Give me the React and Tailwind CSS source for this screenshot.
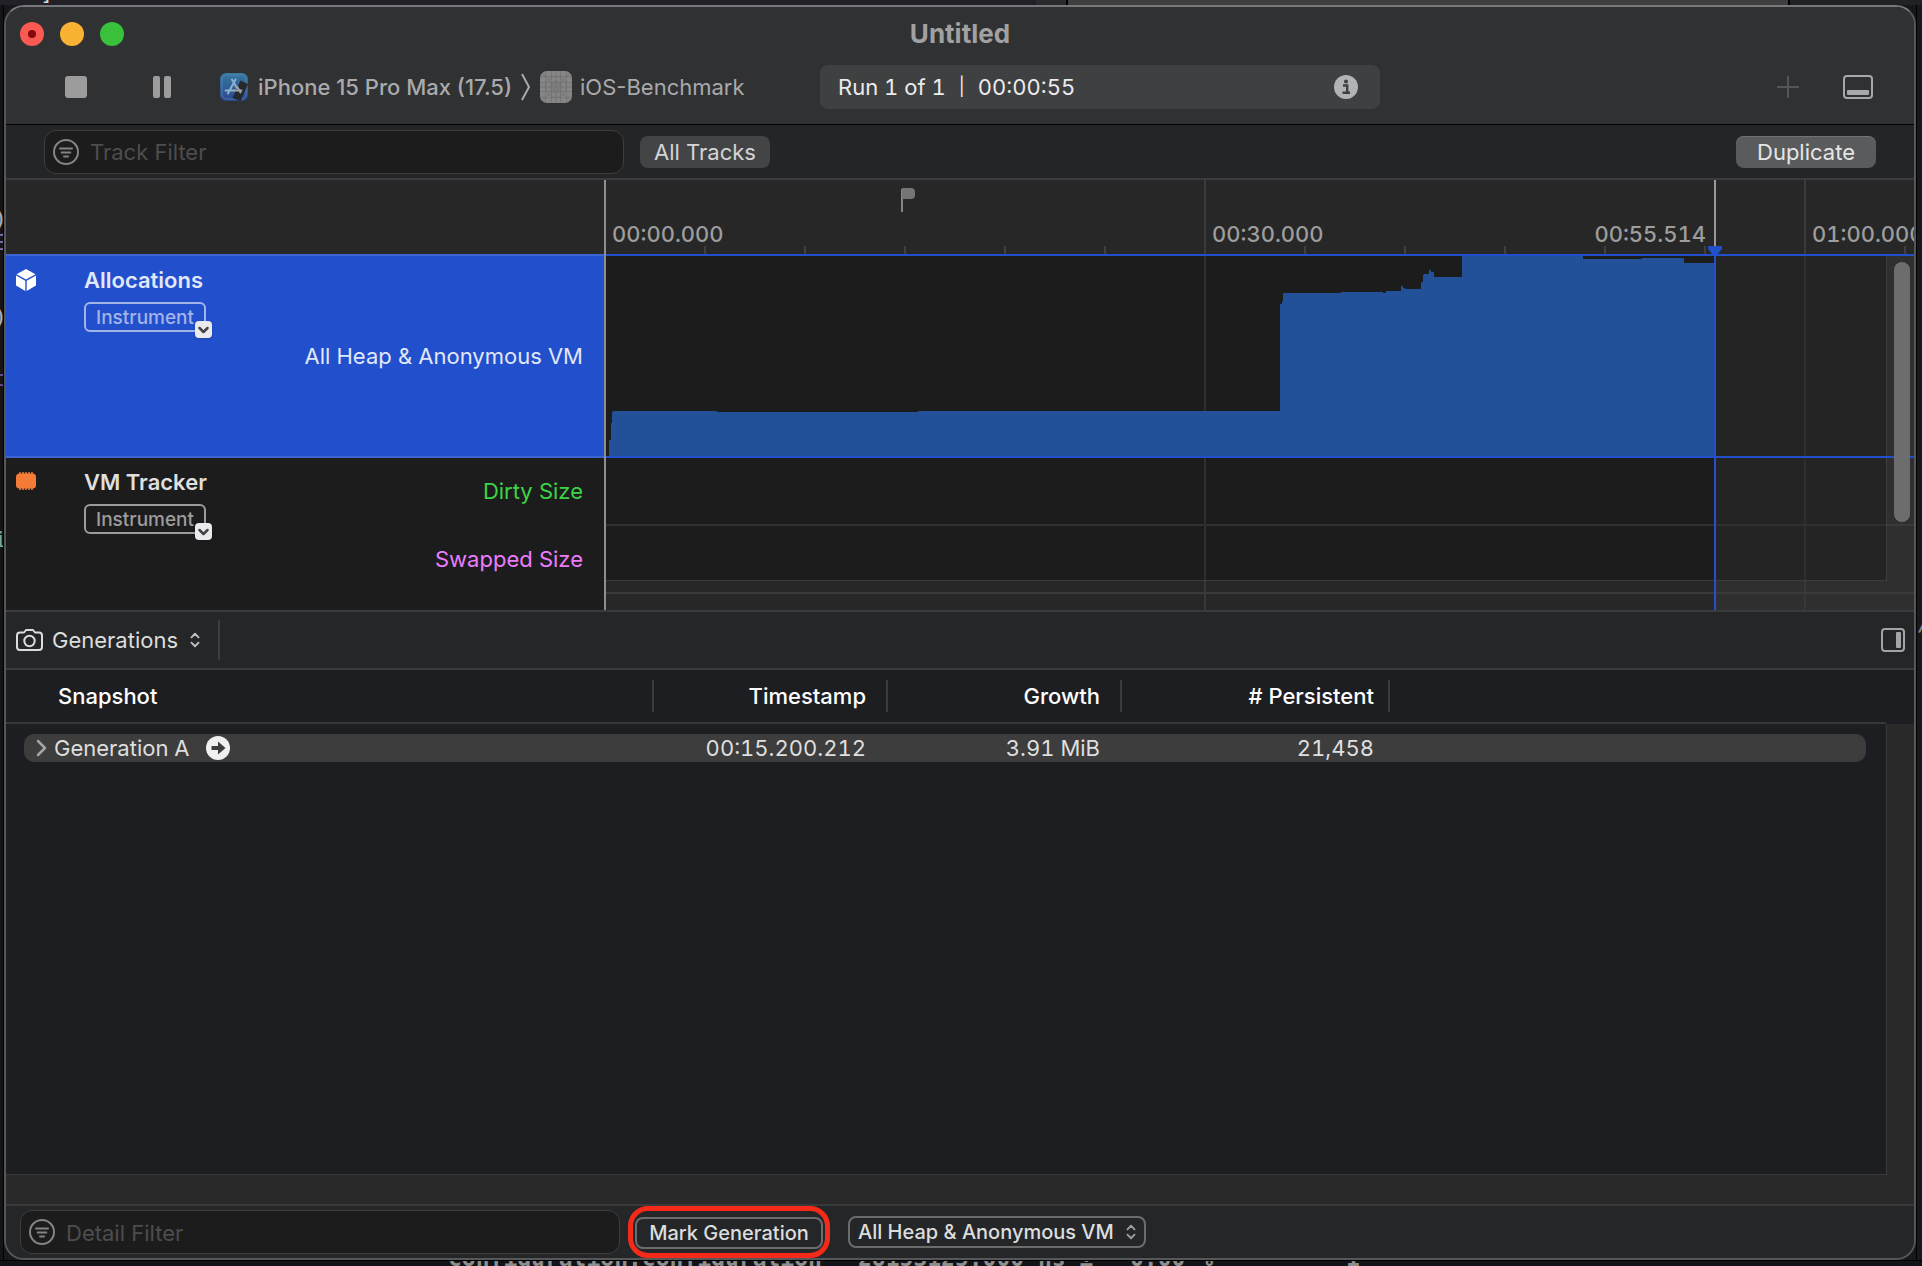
import React from "react";

const STEPS = [
  [609, 440], [611, 423], [612, 412], [613, 411], [717, 412], [918, 411],
  [1280, 304], [1282, 301], [1283, 293], [1341, 292], [1383, 293], [1386, 291],
  [1401, 286], [1403, 288], [1405, 289], [1421, 282], [1423, 275], [1424, 274],
  [1429, 270], [1431, 272], [1434, 277], [1462, 256], [1583, 259], [1642, 258],
  [1684, 263],
].map(([x, y]) => [x - 606, y - 256]);

const HEAP_PATH =
  "M3 200" +
  STEPS.map(([x, y]) => "H" + x + "V" + y).join("") +
  "H1108V200Z";

const TICKS = [98, 198, 298, 398, 498, 698, 798, 898, 998, 1098, 1298];

function FilterIcon() {
  return (
    <svg className="size-[26px] shrink-0" viewBox="0 0 26 26" fill="none" stroke="#848484" strokeWidth="2" strokeLinecap="round">
      <circle cx="13" cy="13" r="12" />
      <path d="M7 9.5h12M8.700 13.500h8.600M11 17.500h4" />
    </svg>
  );
}

function UpDown({ className }) {
  return (
    <svg className={className} viewBox="0 0 12 18" fill="none" stroke="currentColor" strokeWidth="2.200" strokeLinecap="round" strokeLinejoin="round">
      <path d="M2 6l4-4 4 4M2 12l4 4 4-4" />
    </svg>
  );
}

function DeviceIcon() {
  return (
    <svg className="size-7 shrink-0" viewBox="0 0 28 28" fill="none">
      <defs>
        <linearGradient id="device" x1="0" y1="0" x2="0" y2="1">
          <stop offset="0" stopColor="#357a9f" />
          <stop offset="1" stopColor="#2b4590" />
        </linearGradient>
      </defs>
      <rect width="28" height="28" rx="6" fill="url(#device)" />
      <rect x="2" y="2" width="24" height="24" rx="4.500" stroke="#5b8fb4" strokeOpacity=".7" />
      <path d="M15.500 6.500L8 20.500M12 6.500l6 10.500M5.500 17.500h9" stroke="#8fb0cc" strokeWidth="2" strokeLinecap="round" />
      <path d="M20.500 7.500l7.500 3.500-7.500 17-8-3z" fill="#25282d" />
      <path d="M14 17.500h7.500M17 13.500l3.500 6" stroke="#9da3a8" strokeWidth="2" strokeLinecap="round" />
    </svg>
  );
}

function AppGridIcon() {
  return (
    <svg className="size-8 shrink-0" viewBox="0 0 32 32" fill="none">
      <rect width="32" height="32" rx="7" fill="#868686" />
      <g stroke="#6e6e6e" strokeWidth=".8" strokeOpacity=".8">
        <path d="M5.500 0v32M11.500 0v32M16 0v32M20.500 0v32M26.500 0v32M0 5.500h32M0 11.500h32M0 16h32M0 20.500h32M0 26.500h32M2 2l28 28M30 2L2 30" />
        <circle cx="16" cy="16" r="10.500" />
        <circle cx="16" cy="16" r="6" />
        <circle cx="16" cy="16" r="3.500" />
      </g>
    </svg>
  );
}

function InstrumentBadge({ tone }) {
  return (
    <button type="button" className={"relative flex h-[30px] w-[122px] items-center rounded-md border-2 pt-px pl-[10px] text-[19px] font-medium " + tone}>
      Instrument
      <span className="absolute -right-2 -bottom-2 flex size-[17px] items-center justify-center rounded bg-[#e9e9ee] shadow">
        <svg className="size-[13px]" viewBox="0 0 13 13" fill="none" stroke="#444" strokeWidth="2.500" strokeLinecap="round" strokeLinejoin="round">
          <path d="M2.500 5l4 4 4-4" />
        </svg>
      </span>
    </button>
  );
}

function Toolbar() {
  return (
    <header className="flex h-[118px] shrink-0 flex-col border-b border-black bg-[#303133]">
      <div className="flex h-[54px] items-center">
        <div className="flex flex-1 items-center gap-4 pl-[14px]">
          <button type="button" aria-label="Close" className="flex size-6 items-center justify-center rounded-full bg-[#fb5a52]">
            <span className="size-2 rounded-full bg-[#87090c]" />
          </button>
          <button type="button" aria-label="Minimize" className="size-6 rounded-full bg-[#f9b233]" />
          <button type="button" aria-label="Zoom" className="size-6 rounded-full bg-[#3ac13c]" />
        </div>
        <h1 className="text-[26px] leading-8 font-bold text-[#a1a1a2]">Untitled</h1>
        <div className="flex-1 pl-[14px]" />
      </div>
      <div className="flex h-[52px] items-center text-[22px] text-[#a9aaab]">
        <div className="flex w-[814px] shrink-0 items-center pl-[59px]">
          <button type="button" aria-label="Stop" className="size-[22px] rounded-[3px] bg-[#9c9c9d]" />
          <button type="button" aria-label="Pause" className="ml-[66px] flex gap-1">
            <span className="h-[22px] w-[7px] rounded-[2px] bg-[#9c9c9d]" />
            <span className="h-[22px] w-[7px] rounded-[2px] bg-[#9c9c9d]" />
          </button>
          <button type="button" className="ml-[49px] flex items-center gap-[10px] font-medium whitespace-nowrap">
            <DeviceIcon />
            iPhone 15 Pro Max (17.5)
          </button>
          <svg className="mx-[9px] h-7 w-[10px] shrink-0" viewBox="0 0 10 28" fill="none" stroke="#a9aaab" strokeWidth="2">
            <path d="M1 1l7 13-7 13" />
          </svg>
          <button type="button" className="flex items-center gap-2 whitespace-nowrap">
            <AppGridIcon />
            iOS-Benchmark
          </button>
        </div>
        <div className="flex h-11 w-[560px] items-center justify-between rounded-lg bg-[#3f4042] pr-[22px] pl-[18px] text-[#ececec]">
          <span className="flex items-center gap-[13px] tabular-nums">
            <span>Run 1 of 1</span>
            <span className="text-lg">|</span>
            <span>00:00:55</span>
          </span>
          <button type="button" aria-label="Run info">
            <svg className="size-6" viewBox="0 0 24 24">
              <circle cx="12" cy="12" r="12" fill="#b2b3b4" />
              <circle cx="12" cy="6.500" r="2" fill="#3f4042" />
              <path d="M9 10.500h4.200v7M8.500 17.800h7.500" stroke="#3f4042" strokeWidth="2.400" fill="none" />
            </svg>
          </button>
        </div>
        <div className="flex flex-1 items-center justify-end gap-11 pr-[41px]">
          <button type="button" aria-label="Add">
            <svg className="size-[22px]" viewBox="0 0 22 22" stroke="#555658" strokeWidth="2">
              <path d="M11 0v22M0 11h22" />
            </svg>
          </button>
          <button type="button" aria-label="Toggle detail pane">
            <svg className="h-6 w-[30px]" viewBox="0 0 30 24" fill="none">
              <rect x="1" y="1" width="28" height="22" rx="3" stroke="#a7a8a9" strokeWidth="2" />
              <rect x="4" y="15" width="22" height="5" rx="1" fill="#a7a8a9" />
            </svg>
          </button>
        </div>
      </div>
    </header>
  );
}

function TrackFilterBar() {
  return (
    <div className="flex h-[55px] shrink-0 items-center border-b-2 border-[#3a3b3e] bg-[#242527] pr-[38px] pl-[38px] text-[22px]">
      <label className="flex h-11 w-[580px] items-center gap-[11px] rounded-xl border border-[#3d3e3f] bg-[#1c1c1c] pl-2">
        <FilterIcon />
        <input aria-label="Track Filter" placeholder="Track Filter" className="min-w-0 flex-1 bg-transparent pt-[2px] text-[#ddd] outline-none placeholder:text-[#4d4d4d]" />
      </label>
      <button type="button" className="ml-4 h-8 w-[130px] rounded-lg bg-[#434446] text-[#d4d5d5]">All Tracks</button>
      <button type="button" className="ml-auto h-8 w-[140px] rounded-lg bg-[#5a5b5d] text-[#e6e6e6] shadow-[inset_0_1px_0_#727374]">Duplicate</button>
    </div>
  );
}

function TrackList() {
  return (
    <div className="flex w-[600px] shrink-0 flex-col border-r-2 border-[#8e8e90] bg-[#1c1c1c] text-[22px] leading-7">
      <div className="h-[74px] bg-[#272727]" />
      <section className="flex h-[204px] border-y-2 border-[#3d65d1] bg-[#224fcb] text-[#e1e7f8]">
        <svg className="mt-[13px] ml-[10px] h-[22px] w-5" viewBox="0 0 20 22" fill="#fff">
          <path d="M10 0l9.500 5.300L10 10.600.500 5.300zM0 6.600l9.300 5.200V22L0 16.500zM20 6.600l-9.300 5.200V22l9.300-5.500z" />
        </svg>
        <div className="ml-[48px] pt-[10px]">
          <h2 className="mb-2 font-semibold">Allocations</h2>
          <InstrumentBadge tone="border-[#a3b4e8] text-[#a3b4e8]" />
        </div>
        <p className="mt-[86px] mr-[21px] ml-auto">All Heap &amp; Anonymous VM</p>
      </section>
      <section className="flex h-[152px] text-[#dfdfdf]">
        <svg className="mt-[14px] ml-[10px] h-[18px] w-5" viewBox="0 0 20 18" fill="#f57c38">
          <rect y="1.500" width="20" height="15" rx="3.500" />
          <path d="M4 0v18M7 0v18M10 0v18M13 0v18M16 0v18" stroke="#f57c38" strokeWidth="1.500" />
        </svg>
        <div className="ml-[48px] pt-[10px]">
          <h2 className="mb-2 font-semibold">VM Tracker</h2>
          <InstrumentBadge tone="border-[#9c9c9c] text-[#9c9c9c]" />
        </div>
        <div className="mt-[19px] mr-[21px] ml-auto flex flex-col gap-10 text-right">
          <p className="text-[#3dd445]">Dirty Size</p>
          <p className="text-[#ec7cff]">Swapped Size</p>
        </div>
      </section>
    </div>
  );
}

function Timeline() {
  return (
    <div className="relative min-w-0 flex-1 overflow-hidden bg-[#272727]">
      <svg className="h-[430px] w-[1400px]" viewBox="0 0 1400 430" shapeRendering="crispEdges">
        <rect width="1400" height="74" fill="#272727" />
        <rect y="74" width="1108" height="356" fill="#1c1c1c" />
        <rect x="1108" y="74" width="292" height="356" fill="#242424" />
        <rect y="344" width="1400" height="2" fill="#303030" />
        <path d="M599 0V74M1199 0V74" stroke="#3b3b3b" strokeWidth="2" />
        <path d="M599 74V430M1199 74V430" stroke="#2e2e2e" strokeWidth="2" />
        {TICKS.map((x) => (
          <rect key={x} x={x} y="66" width="2" height="8" fill="#3f3f3f" />
        ))}
        <g transform="translate(0 76)">
          <path d={HEAP_PATH} fill="#235199" />
        </g>
        <path d="M0 400H1280V76H1400V430H0Z" fill="#fff" fillOpacity=".05" />
        <path d="M0 400.500H1280.500V76" fill="none" stroke="#3d3d3d" />
        <rect y="412" width="1400" height="2" fill="#3a3a3a" />
        <rect y="74" width="1400" height="2" fill="#224fcb" />
        <rect y="276" width="1400" height="2" fill="#224fcb" />
        <rect x="1108" width="2" height="74" fill="#98989a" />
        <rect x="1108" y="74" width="2" height="356" fill="#2450cb" />
        <path d="M1102 66h14v3l-5 6h-4l-5-6z" fill="#224fcb" shapeRendering="auto" />
        <path d="M296 9v23" stroke="#858585" strokeWidth="2" />
        <path d="M296 8h9q4 0 4 4v3q0 4-4 4h-9z" fill="#757575" shapeRendering="auto" />
      </svg>
      <div className="absolute top-[40px] left-0 flex w-[1400px] text-[22px] leading-7 font-medium text-[#9d9d9d] tabular-nums">
        <time className="w-[600px] pl-[6px]">00:00.000</time>
        <time className="w-[300px] pl-[6px]">00:30.000</time>
        <time className="w-[200px] text-right">00:55.514</time>
        <time className="pl-[106px]">01:00.000</time>
      </div>
      <div className="absolute top-[82px] right-1 h-[260px] w-4 rounded-full bg-[#6d6d6d]" />
    </div>
  );
}

function DetailBar() {
  return (
    <div className="flex h-[60px] shrink-0 items-center border-y-2 border-[#3a3b3c] bg-[#252628] pr-[9px] pl-[10px] text-[22px] text-[#dcdddd]">
      <button type="button" className="flex items-center gap-[9px]">
        <svg className="h-[22px] w-[27px]" viewBox="0 0 27 22" fill="none" stroke="#dcdddd" strokeWidth="2" strokeLinejoin="round">
          <path d="M4 3.500h4l2-2.500h7l2 2.500h4q3 0 3 3V18q0 3-3 3H4q-3 0-3-3V6.500q0-3 3-3z" />
          <circle cx="13.500" cy="12" r="5.200" />
        </svg>
        Generations
        <UpDown className="ml-[2px] h-4 w-3 text-[#bdbdbe]" />
      </button>
      <span className="ml-[17px] h-10 w-[2px] bg-[#3c3d3f]" />
      <button type="button" aria-label="Toggle inspector" className="ml-auto">
        <svg className="size-6" viewBox="0 0 24 24" fill="none">
          <rect x="1" y="1" width="22" height="22" rx="3" stroke="#a3a4a5" strokeWidth="2" />
          <rect x="15" y="4" width="5" height="16" rx="1" fill="#a3a4a5" />
        </svg>
      </button>
    </div>
  );
}

const HEADERS = [
  { name: "Timestamp", cell: "w-[234px]", pad: "pr-5" },
  { name: "Growth", cell: "w-[234px]", pad: "pr-5" },
  { name: "# Persistent", cell: "w-[268px]", pad: "pr-[14px]" },
];

function GenerationTable() {
  return (
    <div className="flex flex-1 flex-col bg-[#292929]">
      <div className="flex flex-1 bg-[#1d1e22]">
        <div className="flex-1 border-b border-[#3a3a3a]">
          <table className="w-full table-fixed border-separate border-spacing-0 text-[22px] leading-7">
            <thead className="text-white">
              <tr>
                <th scope="col" className="h-[54px] w-[648px] border-b-2 border-[#37383b] p-0 text-left font-medium">
                  <div className="flex h-8 items-center border-r-2 border-[#3a3b3e] pl-[52px]">Snapshot</div>
                </th>
                {HEADERS.map(({ name, cell, pad }) => (
                  <th key={name} scope="col" className={"border-b-2 border-[#37383b] p-0 font-medium " + cell}>
                    <div className={"flex h-8 items-center justify-end border-r-2 border-[#3a3b3e] " + pad}>{name}</div>
                  </th>
                ))}
                <th className="border-b-2 border-[#37383b] p-0" />
              </tr>
            </thead>
            <tbody className="text-[#dfdfdf] tabular-nums">
              <tr aria-hidden="true"><td colSpan={5} className="h-[10px] p-0" /></tr>
              <tr>
                <td className="py-0 pr-0 pl-[18px]">
                  <div className="flex h-7 items-center rounded-l-[10px] bg-[#3d3d3d] pl-3">
                    <button type="button" aria-label="Expand Generation A">
                      <svg className="h-[18px] w-[11px]" viewBox="0 0 11 18" fill="none" stroke="#a5a5a5" strokeWidth="2.500" strokeLinecap="round" strokeLinejoin="round">
                        <path d="M2 2l7 7-7 7" />
                      </svg>
                    </button>
                    <span className="ml-[7px]">Generation A</span>
                    <button type="button" aria-label="Show Generation A" className="ml-4">
                      <svg className="size-6" viewBox="0 0 24 24">
                        <circle cx="12" cy="12" r="12" fill="#f0f0f0" />
                        <path d="M5.500 10H12V5.500L19.500 12 12 18.500V14H5.500z" fill="#3d3d3d" />
                      </svg>
                    </button>
                  </div>
                </td>
                <td className="p-0 text-right"><div className="h-7 bg-[#3d3d3d] pr-[22px]">00:15.200.212</div></td>
                <td className="p-0 text-right"><div className="h-7 bg-[#3d3d3d] pr-[22px]">3.91 MiB</div></td>
                <td className="p-0 text-right"><div className="h-7 bg-[#3d3d3d] pr-4">21,458</div></td>
                <td className="py-0 pr-5 pl-0"><div className="h-7 rounded-r-[10px] bg-[#3d3d3d]" /></td>
              </tr>
            </tbody>
          </table>
        </div>
        <div className="mt-[54px] w-7 border-l border-[#3a3a3a] bg-[#292929]" />
      </div>
      <div className="h-[29px] shrink-0" />
    </div>
  );
}

function BottomBar() {
  return (
    <footer className="flex h-[54px] shrink-0 items-center border-t-2 border-[#393a3c] bg-[#252628] pl-[14px] text-xl font-medium text-[#dcdddd]">
      <label className="flex h-11 w-[600px] items-center gap-[11px] rounded-xl border border-[#3d3e3f] bg-[#1c1c1c] pl-2 text-[22px] font-normal">
        <FilterIcon />
        <input aria-label="Detail Filter" placeholder="Detail Filter" className="min-w-0 flex-1 bg-transparent pt-[2px] text-[#ddd] outline-none placeholder:text-[#4d4d4d]" />
      </label>
      <div className="relative z-10 -my-2 ml-2 rounded-[20px] border-[5px] border-[#f62a18] px-[2px] pt-[6px] pb-1">
        <button type="button" className="flex h-8 w-[188px] items-center justify-center rounded-lg border-2 border-[#6b6c6d] whitespace-nowrap">Mark Generation</button>
      </div>
      <label className="relative ml-[18px] flex items-center">
        <select aria-label="Allocation type" className="h-8 w-[298px] appearance-none rounded-lg border-2 border-[#6b6c6d] bg-transparent pl-2 leading-7">
          <option>All Heap &amp; Anonymous VM</option>
        </select>
        <UpDown className="pointer-events-none absolute right-[9px] h-4 w-3 text-[#9c9c9d]" />
      </label>
    </footer>
  );
}

export default function App() {
  return (
    <div className="relative flex min-h-screen flex-col overflow-hidden bg-[#17181b] font-['Inter',sans-serif]">
      <div className="flex h-[5px] shrink-0 items-end overflow-hidden bg-[#222127] pl-[40px] font-['DejaVu_Sans_Mono',monospace] text-[22px] leading-6 text-[#d8d8d8]">
        <span>]</span>
        <span className="ml-auto h-[5px] w-[30px] shrink-0 bg-[#2a2a2d]" />
        <span className="h-[5px] w-[724px] shrink-0 border-x-2 border-black bg-[#3f3f3f]" />
        <span className="h-[5px] w-[132px] shrink-0 bg-[#202224]" />
      </div>
      <div className="flex flex-1">
        <div className="flex w-1 shrink-0 flex-col items-end overflow-hidden border-r border-black bg-[#141416] pt-[202px] font-['DejaVu_Sans_Mono',monospace] text-[22px] leading-6">
          <span className="-mr-1 text-[#b0b0b0]">)</span>
          <span className="-mr-1 text-[#8b6cb0]">E</span>
          <span className="-mr-1 mt-[50px] text-[#b0b0b0]">)</span>
          <span className="-mr-1 mt-[38px] text-[#6e4f9a]">c</span>
          <span className="-mr-1 mt-[137px] text-[#6fae98]">i</span>
        </div>
        <main className="flex min-w-0 flex-1 flex-col overflow-hidden rounded-[20px] border-2 border-[#56575a] border-t-[#77787b] bg-[#252628]">
          <Toolbar />
          <TrackFilterBar />
          <div className="flex h-[430px] shrink-0">
            <TrackList />
            <Timeline />
          </div>
          <DetailBar />
          <GenerationTable />
          <BottomBar />
        </main>
        <div className="w-[6px] shrink-0 overflow-hidden border-l border-black pt-[602px] font-['DejaVu_Sans_Mono',monospace] text-[22px] text-[#8a8a8a]">/</div>
      </div>
      <div className="flex h-[6px] shrink-0 items-end overflow-hidden border-t border-black bg-[#121316] pl-[448px] font-['DejaVu_Sans_Mono',monospace] text-[23px] leading-4 font-bold whitespace-pre text-[#8e8e8e]">
        <span className="w-[410px] shrink-0">configuration.configuration</span>
        <span className="w-[272px] shrink-0">28153125.000 ns ±</span>
        <span className="w-[216px] shrink-0">0.00 %</span>
        <span>1</span>
      </div>
    </div>
  );
}
